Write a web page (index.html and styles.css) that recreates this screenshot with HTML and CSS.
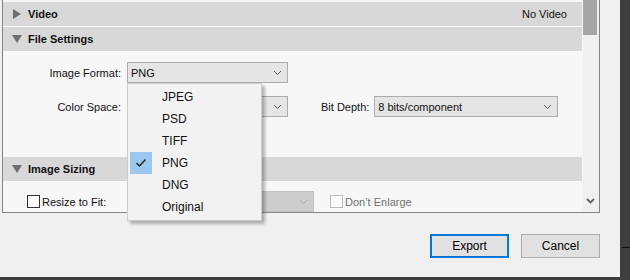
FILE: index.html
```html
<!DOCTYPE html>
<html lang="en">
<head>
    <meta charset="UTF-8">
    <title>Export</title>
    <link rel="stylesheet" href="styles.css">
</head>
<body>
    <div class="screen">
        <div class="dialog">
            <div class="panel">
                <div class="panel-body">
                    <div class="section-head">
                        <span class="tri tri-right"></span>
                        <span class="head-title">Video</span>
                        <span class="head-note">No Video</span>
                    </div>
                    <div class="section-head">
                        <span class="tri tri-down"></span>
                        <span class="head-title">File Settings</span>
                    </div>
                    <div class="section-body settings">
                        <div class="form-row">
                            <span class="label">Image Format:</span>
                            <div class="select-wrap">
                                <div class="select fmt">
                                    <span>PNG</span>
                                    <svg class="chev" width="9" height="6" viewBox="0 0 9 6"><path d="M1 1l3.5 3.5L8 1" fill="none" stroke="#5a5a5a" stroke-width="1"/></svg>
                                </div>
                                <ul class="menu">
                                    <li>JPEG</li>
                                    <li>PSD</li>
                                    <li>TIFF</li>
                                    <li class="checked">
                                        <span class="check"><svg width="12" height="10" viewBox="0 0 12 10"><path d="M1.5 5l3 3L10.5 1.5" fill="none" stroke="#1e1e1e" stroke-width="1.4"/></svg></span>
                                        PNG
                                    </li>
                                    <li>DNG</li>
                                    <li>Original</li>
                                </ul>
                            </div>
                        </div>
                        <div class="form-row">
                            <span class="label">Color Space:</span>
                            <div class="select fmt">
                                <span></span>
                                <svg class="chev" width="9" height="6" viewBox="0 0 9 6"><path d="M1 1l3.5 3.5L8 1" fill="none" stroke="#5a5a5a" stroke-width="1"/></svg>
                            </div>
                            <span class="label-inline">Bit Depth:</span>
                            <div class="select depth">
                                <span>8 bits/component</span>
                                <svg class="chev" width="9" height="6" viewBox="0 0 9 6"><path d="M1 1l3.5 3.5L8 1" fill="none" stroke="#5a5a5a" stroke-width="1"/></svg>
                            </div>
                        </div>
                    </div>
                    <div class="section-head">
                        <span class="tri tri-down"></span>
                        <span class="head-title">Image Sizing</span>
                    </div>
                    <div class="section-body sizing">
                        <label class="check-label resize">
                            <span class="box"></span>Resize to Fit:
                        </label>
                        <div class="select disabled">
                            <span></span>
                            <svg class="chev" width="9" height="6" viewBox="0 0 9 6"><path d="M1 1l3.5 3.5L8 1" fill="none" stroke="#a9a9a9" stroke-width="1"/></svg>
                        </div>
                        <label class="check-label muted">
                            <span class="box"></span>Don’t Enlarge
                        </label>
                    </div>
                </div>
                <div class="scrollbar">
                    <div class="thumb"></div>
                    <svg class="scroll-down" width="9" height="6" viewBox="0 0 9 6"><path d="M1 1l3.5 3.5L8 1" fill="none" stroke="#606060" stroke-width="1.8"/></svg>
                </div>
            </div>
            <div class="buttons">
                <button class="btn primary">Export</button>
                <button class="btn">Cancel</button>
            </div>
        </div>
        <div class="side"><div class="side-line"></div></div>
    </div>
    <div class="bottom-strip"></div>
</body>
</html>
```

FILE: styles.css
```css
body {
    margin: 0;
    width: 630px;
    height: 280px;
    overflow: hidden;
    background: #f0f0f0;
    font-family: "Liberation Sans", Arial, sans-serif;
    font-size: 11px;
    color: #111;
}
.screen {
    display: flex;
    height: 277px;
}
.dialog {
    width: 620px;
    background: #f0f0f0;
}
.side {
    flex: 1;
    background: #3e3e3e;
    position: relative;
}
.side-line {
    position: absolute;
    top: 247px;
    left: 2px;
    right: 0;
    height: 1px;
    background: #111;
}
.bottom-strip {
    height: 3px;
    background: #3e3e3e;
}

.panel {
    display: flex;
    margin-left: 2px;
    width: 596px;
    height: 212px;
    border: 1px solid #858585;
    border-top: none;
    background: #f7f7f7;
}
.panel-body {
    flex: 1;
    padding: 2px 1px 0 0;
}
.section-head {
    display: flex;
    align-items: center;
    height: 24px;
    background: #d8d8d8;
    border-bottom: 1px solid #fbfbfb;
    padding-left: 5px;
}
.head-title {
    font-weight: bold;
    margin-left: 6px;
}
.head-note {
    margin-left: auto;
    margin-right: 15px;
}
.tri {
    width: 0;
    height: 0;
}
.tri-right {
    margin-left: 5px;
    margin-right: 1px;
    border-top: 5px solid transparent;
    border-bottom: 5px solid transparent;
    border-left: 8px solid #6e6e6e;
}
.tri-down {
    margin-left: 4px;
    border-left: 5px solid transparent;
    border-right: 5px solid transparent;
    border-top: 8px solid #6e6e6e;
}

.section-body.settings {
    height: 105px;
    padding-top: 10px;
    box-sizing: border-box;
}
.form-row {
    display: flex;
    align-items: center;
    margin-bottom: 13px;
}
.label {
    width: 118px;
    text-align: right;
    margin-right: 6px;
}
.label-inline {
    margin-left: 33px;
    margin-right: 5px;
}
.select-wrap {
    position: relative;
}
.select {
    display: flex;
    align-items: center;
    justify-content: space-between;
    box-sizing: border-box;
    height: 21px;
    padding: 0 5px 0 3px;
    background: #e5e5e5;
    border: 1px solid #acacac;
}
.select.fmt {
    width: 161px;
}
.select.depth {
    width: 184px;
}
.select.disabled {
    width: 187px;
    background: #cccccc;
    border-color: #c2c2c2;
}

.menu {
    position: absolute;
    top: 100%;
    left: 0;
    width: 133px;
    margin: 0;
    padding: 2px 0;
    list-style: none;
    background: #f2f2f2;
    border: 1px solid #cccccc;
    box-shadow: 3px 3px 3px rgba(0, 0, 0, 0.28);
    z-index: 5;
    font-size: 12px;
}
.menu li {
    position: relative;
    height: 22px;
    line-height: 22px;
    padding-left: 34px;
}
.check {
    position: absolute;
    left: 2px;
    top: 0;
    width: 22px;
    height: 22px;
    background: #99c9f0;
    display: flex;
    align-items: center;
    justify-content: center;
}

.section-body.sizing {
    display: flex;
    align-items: center;
    padding-top: 9px;
}
.check-label {
    display: flex;
    align-items: center;
}
.check-label .box {
    width: 11px;
    height: 11px;
    border: 1px solid #333;
    background: #fff;
    margin-right: 2px;
}
.check-label.resize {
    box-sizing: border-box;
    width: 124px;
    padding-left: 24px;
}
.check-label.muted {
    margin-left: 16px;
    color: #707070;
}
.check-label.muted .box {
    border-color: #bcbcbc;
}

.scrollbar {
    width: 16px;
    position: relative;
    background: #f0f0f0;
}
.thumb {
    width: 14px;
    height: 35px;
    background: #a6a6a6;
}
.scroll-down {
    position: absolute;
    left: 3px;
    bottom: 8px;
}

.buttons {
    display: flex;
    justify-content: flex-end;
    gap: 12px;
    margin-top: 21px;
    padding-right: 20px;
}
.btn {
    box-sizing: border-box;
    width: 79px;
    height: 24px;
    background: #e1e1e1;
    border: 1px solid #adadad;
    font-family: "Liberation Sans", Arial, sans-serif;
    font-size: 12px;
    color: #000;
    padding: 0;
}
.btn.primary {
    border: 2px solid #0078d7;
}
```
